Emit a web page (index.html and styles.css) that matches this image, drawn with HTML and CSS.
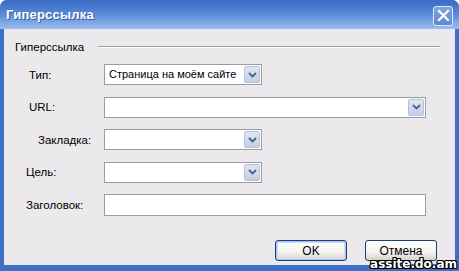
FILE: index.html
```html
<!DOCTYPE html>
<html lang="ru">
<head>
    <meta charset="utf-8">
    <title>Гиперссылка</title>
    <link rel="stylesheet" href="styles.css">
</head>
<body>

<div class="window">
    <div class="titlebar">
        <span class="title">Гиперссылка</span>
        <button class="close-btn" aria-label="Закрыть">
            <svg width="13" height="13" viewBox="0 0 13 13">
                <path d="M2 2 L11 11 M11 2 L2 11" stroke="#fff" stroke-width="2.2" stroke-linecap="square"/>
            </svg>
        </button>
    </div>

    <div class="dialog">
        <div class="group-head">
            <span>Гиперссылка</span>
            <div class="group-line"></div>
        </div>

        <div class="form">
            <div class="row">
                <label class="lbl lbl-type">Тип:</label>
                <div class="combo">
                    <span class="combo-text">Страница на моём сайте</span>
                    <span class="combo-arrow"><svg width="9" height="6" viewBox="0 0 9 6"><path d="M1 1 L4.5 4.5 L8 1" stroke="#4d6185" stroke-width="1.8" fill="none"/></svg></span>
                </div>
            </div>
            <div class="row">
                <label class="lbl lbl-url">URL:</label>
                <div class="combo combo-wide">
                    <span class="combo-text"></span>
                    <span class="combo-arrow"><svg width="9" height="6" viewBox="0 0 9 6"><path d="M1 1 L4.5 4.5 L8 1" stroke="#4d6185" stroke-width="1.8" fill="none"/></svg></span>
                </div>
            </div>
            <div class="row">
                <label class="lbl lbl-mark">Закладка:</label>
                <div class="combo">
                    <span class="combo-text"></span>
                    <span class="combo-arrow"><svg width="9" height="6" viewBox="0 0 9 6"><path d="M1 1 L4.5 4.5 L8 1" stroke="#4d6185" stroke-width="1.8" fill="none"/></svg></span>
                </div>
            </div>
            <div class="row">
                <label class="lbl lbl-target">Цель:</label>
                <div class="combo">
                    <span class="combo-text"></span>
                    <span class="combo-arrow"><svg width="9" height="6" viewBox="0 0 9 6"><path d="M1 1 L4.5 4.5 L8 1" stroke="#4d6185" stroke-width="1.8" fill="none"/></svg></span>
                </div>
            </div>
            <div class="row">
                <label class="lbl lbl-target">Заголовок:</label>
                <input type="text" class="field">
            </div>
        </div>

        <div class="buttons">
            <button class="btn btn-default">OK</button>
            <button class="btn">Отмена</button>
        </div>
    </div>

    <div class="watermark">assite.do.am</div>
</div>

</body>
</html>
```

FILE: styles.css
```css
body {
    margin: 0;
    padding: 0;
    font-family: "Liberation Sans", Arial, sans-serif;
    font-size: 11.5px;
    color: #000;
    background-color: #ffffff;
}

.window {
    position: relative;
    width: 459px;
    height: 271px;
    overflow: hidden;
    background-color: #3f70c8;
    border-radius: 7px 7px 0 0;
}

.titlebar {
    height: 29px;
    display: flex;
    align-items: center;
    justify-content: space-between;
    padding: 0 6px 0 6px;
    box-sizing: border-box;
    background: linear-gradient(#3a6cc4 0%, #4e80d2 35%, #6d9be0 65%, #9dbdec 100%);
}

.title {
    color: #fff;
    font-weight: bold;
    font-size: 13px;
    letter-spacing: 0.2px;
    text-shadow: 1px 1px 0 #345a9e;
}

.close-btn {
    width: 20px;
    height: 20px;
    margin-top: 2px;
    padding: 0;
    display: flex;
    align-items: center;
    justify-content: center;
    border: 1px solid #dfe8f7;
    border-radius: 3px;
    background: linear-gradient(#7fa4e2, #5c87d3);
}

.dialog {
    height: 236px;
    margin: 0 4px;
    background-color: #ebe9ec;
    display: flex;
    flex-direction: column;
}

.group-head {
    display: flex;
    align-items: center;
    height: 14px;
    margin-top: 11px;
    padding-left: 11px;
}

.group-line {
    flex: 1;
    height: 0;
    border-top: 1px solid #a09fa3;
    border-bottom: 1px solid #ffffff;
    margin: 0 15px 0 14px;
}

.form {
    display: flex;
    flex-direction: column;
    gap: 11.5px;
    margin-top: 10px;
}

.row {
    display: flex;
    align-items: center;
    height: 21px;
}

.lbl {
    width: 100px;
    box-sizing: border-box;
}

.lbl-type { padding-left: 25px; }
.lbl-url { padding-left: 25px; }
.lbl-mark { padding-left: 34px; }
.lbl-target { padding-left: 22px; }

.combo {
    width: 158px;
    height: 21px;
    box-sizing: border-box;
    border: 1px solid #9c9ca0;
    background-color: #fff;
    display: flex;
    align-items: stretch;
}

.combo-wide {
    width: 322px;
}

.combo-text {
    flex: 1;
    padding-left: 4px;
    font-size: 11px;
    line-height: 19px;
    white-space: nowrap;
    overflow: hidden;
}

.combo-arrow {
    width: 16px;
    margin: 1px;
    box-sizing: border-box;
    border: 1px solid #b4c0d8;
    border-radius: 2px;
    background: linear-gradient(#dfe6f4, #c3cfe6);
    display: flex;
    align-items: center;
    justify-content: center;
}

.field {
    width: 322px;
    height: 22px;
    margin: 0;
    box-sizing: border-box;
    border: 1px solid #9c9ca0;
    background-color: #fff;
}

.buttons {
    display: flex;
    gap: 18px;
    margin-top: 25px;
    padding-left: 271px;
}

.btn {
    width: 72px;
    height: 21px;
    padding: 0;
    font-family: "Liberation Sans", Arial, sans-serif;
    font-size: 12px;
    color: #000;
    border: 1px solid #1c3f78;
    border-radius: 3px;
    background: linear-gradient(#ffffff 0%, #f3f3ef 60%, #d6d0c5 100%);
}

.btn-default {
    box-shadow: inset 0 0 0 1px #a9c2ee, inset 0 0 0 2px #cedcf5;
}

.watermark {
    position: absolute;
    right: 2px;
    bottom: 0;
    font-family: "DejaVu Sans", Verdana, sans-serif;
    font-weight: bold;
    font-size: 12px;
    line-height: 14px;
    color: #fff;
    text-shadow: -1px -1px 0 #000, 1px -1px 0 #000, -1px 1px 0 #000, 1px 1px 0 #000, 0 1px 0 #000, 0 -1px 0 #000, 1px 0 0 #000, -1px 0 0 #000;
}
```
